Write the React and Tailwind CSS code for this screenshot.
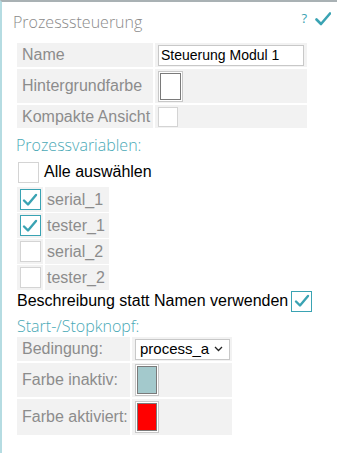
import React from "react";

const arial = { fontFamily: '"Liberation Sans", Arial, sans-serif' };

function Check() {
  return (
    <svg width="16" height="14" viewBox="0 0 16 14">
      <path d="M2 7.5 L6 11.5 L14 2" fill="none" stroke="#3aa3b3" strokeWidth="2.4" strokeLinecap="round" strokeLinejoin="round" />
    </svg>
  );
}

function Box({ checked }) {
  return (
    <div
      className={
        "w-[21px] h-[21px] bg-white flex items-center justify-center border " +
        (checked ? "border-[#3aa3b3]" : "border-[#d4d4d4]")
      }
    >
      {checked && <Check />}
    </div>
  );
}

function Row1({ label, h, children }) {
  return (
    <div className="flex gap-[2px]">
      <div className={"w-[136px] bg-[#f2f2f2] flex items-center pl-[5px] text-[16px] text-[#8c8c8c] " + h}>{label}</div>
      <div className={"w-[152px] bg-[#f2f2f2] flex items-center pl-[3px] " + h}>{children}</div>
    </div>
  );
}

function Row2({ label, h, children }) {
  return (
    <div className="flex gap-[2px]">
      <div className={"w-[113px] bg-[#f2f2f2] flex items-center pl-[5px] text-[16px] text-[#8c8c8c] " + h}>{label}</div>
      <div className={"w-[100px] bg-[#f2f2f2] flex items-center pl-[3px] " + h}>{children}</div>
    </div>
  );
}

function Swatch({ color }) {
  return (
    <div className="w-[24px] h-[32px] border border-[#c8c8c8] p-[1px] bg-white">
      <div className="w-full h-full border border-[#7a7a7a]" style={{ background: color }} />
    </div>
  );
}

function VarRow({ name, checked }) {
  return (
    <div className="flex gap-[2px]">
      <div className="w-[26px] h-[25px] bg-[#f2f2f2] flex items-center justify-center">
        <Box checked={checked} />
      </div>
      <div className="w-[64px] h-[25px] bg-[#f2f2f2] flex items-center pl-[2px] text-[16px] text-[#8c8c8c]">{name}</div>
    </div>
  );
}

export default function App() {
  const title = { fontFamily: '"Open Sans", Lato, sans-serif' };
  return (
    <div className="w-[337px] h-[453px] bg-white border-t-2 border-t-[#a9b1b4] border-l-2 border-l-[#b5dce2] relative" style={arial}>
      <div className="absolute right-[6px] top-[7px] flex items-center gap-[8px]">
        <span className="text-[13px] text-[#3aa3b3]" style={title}>?</span>
        <svg width="16" height="14" viewBox="0 0 16 14">
          <path d="M1.5 7.5 L6 12 L15 1.5" fill="none" stroke="#3aa3b3" strokeWidth="2.6" strokeLinecap="round" strokeLinejoin="round" />
        </svg>
      </div>
      <div className="pl-[15px] pt-[10px]">
        <div className="text-[16px] leading-[20px] text-[#8a8a8a]" style={{ ...title, fontWeight: 300 }}>
          <span className="ml-[-4px]">Prozesssteuerung</span>
        </div>
        <div className="mt-[11px] flex flex-col gap-[2px]">
          <Row1 label="Name" h="h-[24px]">
            <div className="w-[146px] h-[21px] border border-[#c8c8c8] bg-white flex items-center pl-[2px] text-[14px] text-black">
              Steuerung Modul 1
            </div>
          </Row1>
          <Row1 label="Hintergrundfarbe" h="h-[34px]">
            <div className="w-[25px] h-[31px] border border-[#c8c8c8] p-[1px] bg-white">
              <div className="w-full h-full border border-[#7a7a7a] bg-white" />
            </div>
          </Row1>
          <Row1 label="Kompakte Ansicht" h="h-[23px]">
            <div className="w-[20px] h-[20px] border border-[#d4d4d4] bg-white" />
          </Row1>
        </div>
        <div className="mt-[7px] text-[16px] leading-[20px] text-[#4aa9b6]" style={{ ...title, fontWeight: 300 }}>
          <span className="ml-[-1px]">Prozessvariablen:</span>
        </div>
        <div className="mt-[5px] flex items-center gap-[5px] pl-[1px]">
          <Box checked={false} />
          <span className="text-[16px] text-black">Alle auswählen</span>
        </div>
        <div className="mt-[3px] flex flex-col gap-[1px]">
          <VarRow name="serial_1" checked />
          <VarRow name="tester_1" checked />
          <VarRow name="serial_2" />
          <VarRow name="tester_2" />
        </div>
        <div className="mt-[0px] flex items-center gap-[3px] h-[22px]">
          <span className="text-[16px] text-black">Beschreibung statt Namen verwenden</span>
          <Box checked />
        </div>
        <div className="mt-[4px] text-[16px] leading-[20px] text-[#4aa9b6]" style={{ ...title, fontWeight: 300 }}>
          Start-/Stopknopf:
        </div>
        <div className="mt-[1px] flex flex-col gap-[2px]">
          <Row2 label="Bedingung:" h="h-[24px]">
            <div className="w-[95px] h-[21px] border border-[#c8c8c8] bg-white flex items-center justify-between pl-[4px] pr-[6px] text-[15px] text-black">
              <span>process_a</span>
              <svg width="9" height="6" viewBox="0 0 9 6">
                <path d="M1 1 L4.5 4.5 L8 1" fill="none" stroke="#222" strokeWidth="1.3" />
              </svg>
            </div>
          </Row2>
          <Row2 label="Farbe inaktiv:" h="h-[34px]">
            <Swatch color="#a3c9cc" />
          </Row2>
          <Row2 label="Farbe aktiviert:" h="h-[36px]">
            <Swatch color="#ff0000" />
          </Row2>
        </div>
      </div>
    </div>
  );
}
